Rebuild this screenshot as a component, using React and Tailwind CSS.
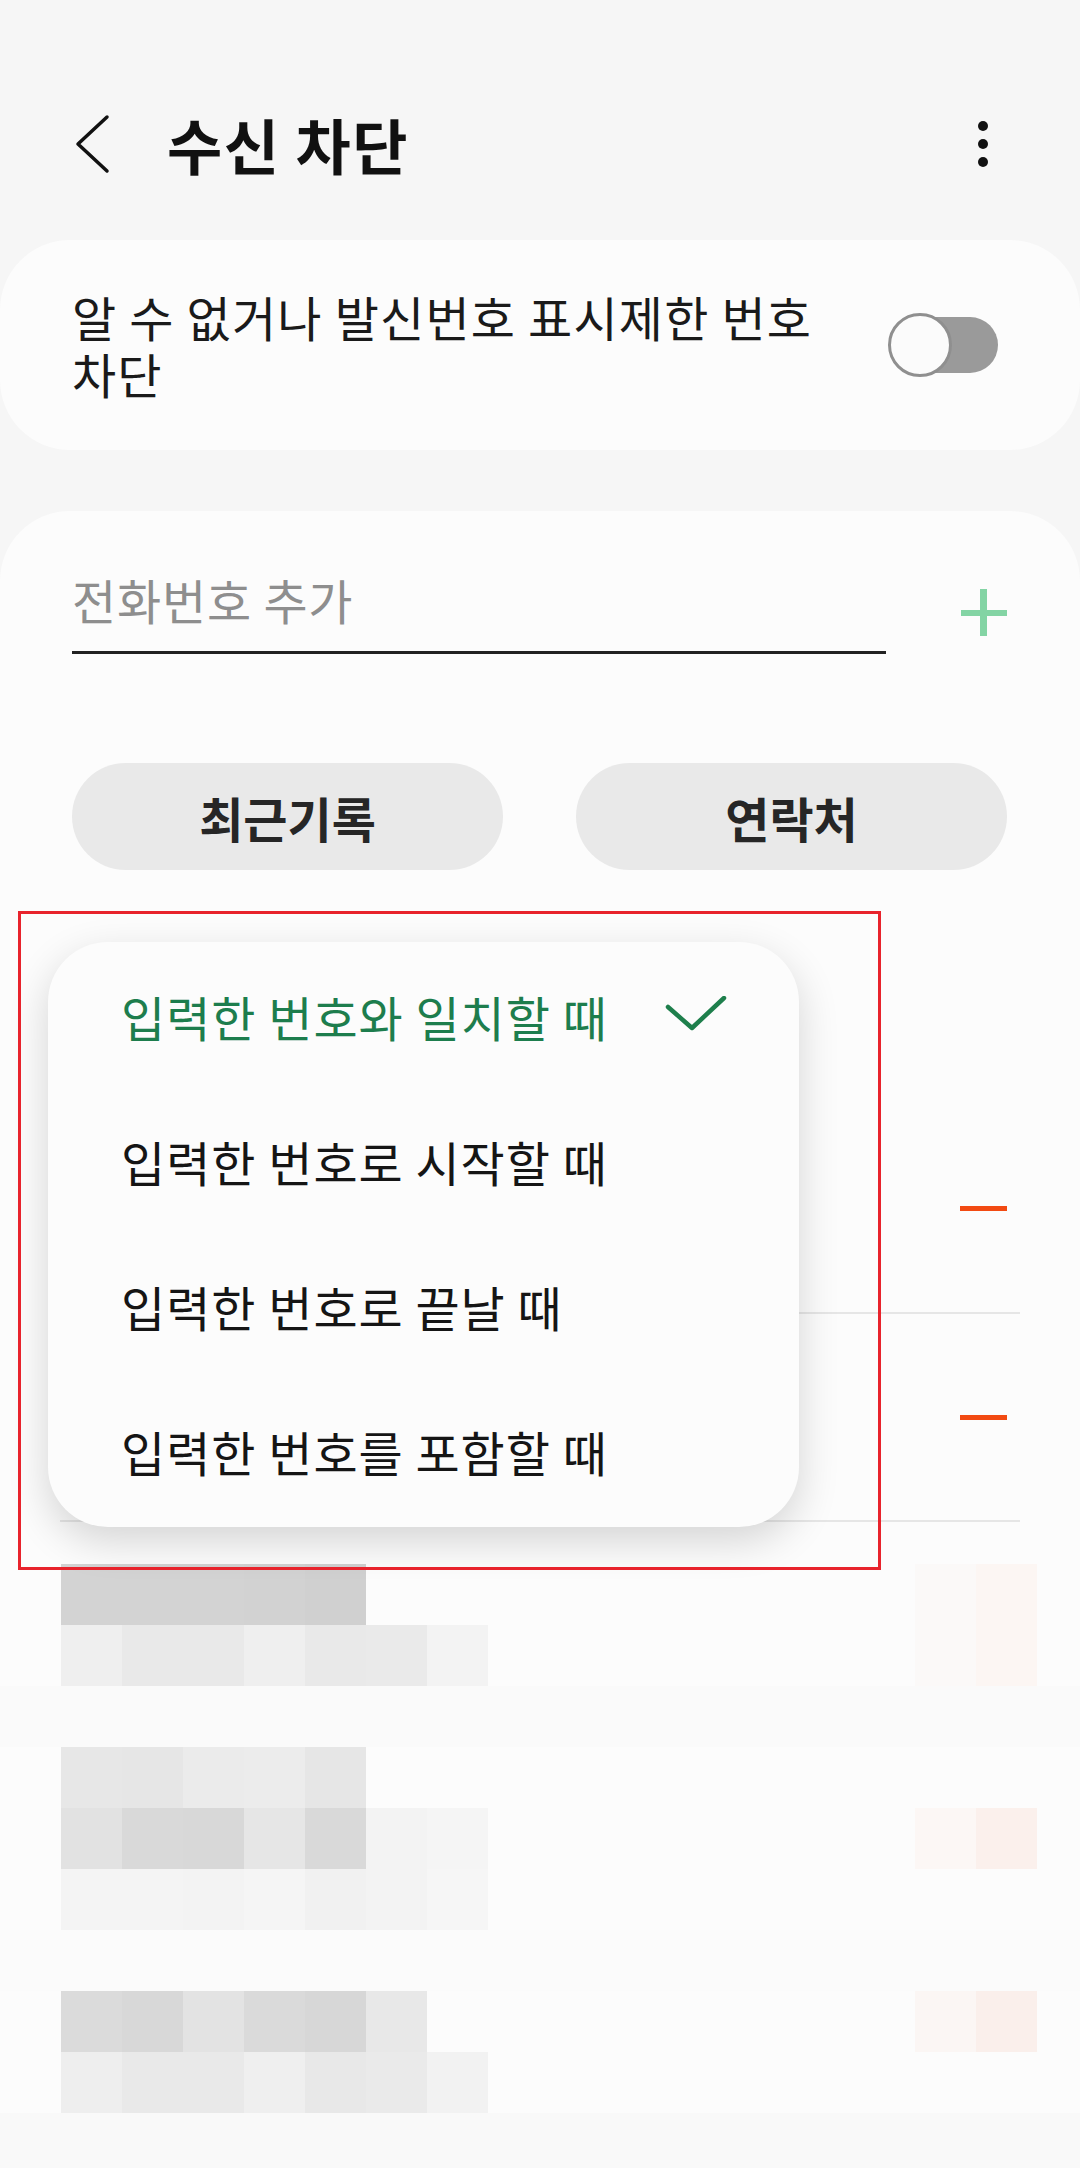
import React from "react";

// mosaic (blurred list rows) - each row is 17 blocks of 61px
const mosaic = [
  { row: "", cells: ["", "bg-[#d3d3d3]", "bg-[#d3d3d3]", "bg-[#d3d3d3]", "bg-[#d2d2d2]", "bg-[#d0d0d0]", "", "", "", "", "", "", "", "", "", "bg-[#fbf9f8]", "bg-[#fcf6f3]"] },
  { row: "", cells: ["", "bg-[#efefef]", "bg-[#e9e9e9]", "bg-[#e9e9e9]", "bg-[#efefef]", "bg-[#e9e9e9]", "bg-[#eaeaea]", "bg-[#f3f3f3]", "", "", "", "", "", "", "", "bg-[#fbf9f8]", "bg-[#fcf6f3]"] },
  { row: "bg-[#fafafa]", cells: [] },
  { row: "", cells: ["", "bg-[#e7e7e7]", "bg-[#e6e6e6]", "bg-[#ebebeb]", "bg-[#ececec]", "bg-[#e6e6e6]"] },
  { row: "", cells: ["", "bg-[#e2e2e2]", "bg-[#d9d9d9]", "bg-[#d8d8d8]", "bg-[#e6e6e6]", "bg-[#d9d9d9]", "bg-[#f3f3f3]", "bg-[#f5f5f5]", "", "", "", "", "", "", "", "bg-[#fcf7f5]", "bg-[#fbf0ec]"] },
  { row: "", cells: ["", "bg-[#f4f4f4]", "bg-[#f4f4f4]", "bg-[#f3f3f3]", "bg-[#f5f5f5]", "bg-[#f1f1f1]", "bg-[#f3f3f3]", "bg-[#f6f6f6]"] },
  { row: "bg-[#fbfbfb]", cells: [] },
  { row: "", cells: ["", "bg-[#dbdbdb]", "bg-[#d8d8d8]", "bg-[#e3e3e3]", "bg-[#dadada]", "bg-[#d7d7d7]", "bg-[#e8e8e8]", "", "", "", "", "", "", "", "", "bg-[#fbf6f4]", "bg-[#faefeb]"] },
  { row: "", cells: ["", "bg-[#eeeeee]", "bg-[#e9e9e9]", "bg-[#e9e9e9]", "bg-[#efefef]", "bg-[#e8e8e8]", "bg-[#eaeaea]", "bg-[#f2f2f2]"] },
  { row: "bg-[#f9f9f9]", cells: [] },
];

const options = [
  "입력한 번호와 일치할 때",
  "입력한 번호로 시작할 때",
  "입력한 번호로 끝날 때",
  "입력한 번호를 포함할 때",
];

function Header() {
  return (
    <div className="flex items-center h-[80px] mt-[104px] pl-[72px] pr-[92px]">
      <svg width="40" height="60" viewBox="0 0 40 60" fill="none">
        <path d="M35 3 L6 30 L35 57" stroke="#111" strokeWidth="3.5" strokeLinecap="round" strokeLinejoin="round" />
      </svg>
      <h1 className="ml-[55px] text-[60px] font-bold leading-none tracking-[1.5px] text-[#111]">수신 차단</h1>
      <div className="ml-auto flex flex-col gap-[8px]">
        <div className="w-[10px] h-[10px] rounded-full bg-[#111]" />
        <div className="w-[10px] h-[10px] rounded-full bg-[#111]" />
        <div className="w-[10px] h-[10px] rounded-full bg-[#111]" />
      </div>
    </div>
  );
}

function Toggle() {
  return (
    <div className="relative ml-auto w-[110px] h-[64px]">
      <div className="absolute left-[8px] top-[4px] w-[102px] h-[56px] rounded-full bg-[#9a9a9a]" />
      <div className="absolute left-0 top-0 w-[64px] h-[64px] rounded-full border-[3px] border-[#8f8f8f] bg-[#fbfbfb]" />
    </div>
  );
}

function UnknownCard() {
  return (
    <div className="mt-[56px] h-[210px] rounded-[70px] bg-[#fcfcfc] flex items-center pl-[72px] pr-[82px]">
      <p className="text-[48px] leading-[57px] tracking-[1.2px] text-[#1a1a1a] whitespace-nowrap">
        알 수 없거나 발신번호 표시제한 번호
        <br />
        차단
      </p>
      <Toggle />
    </div>
  );
}

function Minus() {
  return <div className="w-[47px] h-[5px] bg-[#f24a12]" />;
}

function Mosaic() {
  return (
    <div className="mt-[42px] flex flex-col">
      {mosaic.map((r, i) => (
        <div key={i} className={"flex h-[61px] shrink-0 " + r.row}>
          {r.cells.map((c, j) => (
            <div key={j} className={"w-[61px] h-[61px] shrink-0 " + c} />
          ))}
        </div>
      ))}
    </div>
  );
}

function BlockList() {
  return (
    <div className="mt-[61px] flex-1 rounded-t-[70px] bg-[#fcfcfc] pt-[64px] overflow-hidden">
      <div className="flex items-start pl-[72px]">
        <div className="w-[814px] pb-[28px] border-b-[3px] border-[#222]">
          <div className="text-[48px] leading-none tracking-[0.8px] text-[#8e8e8e]">전화번호 추가</div>
        </div>
        <svg className="ml-[75px] mt-[14px]" width="46" height="47" viewBox="0 0 46 47">
          <rect x="19" y="0" width="7" height="47" fill="#83d4a4" />
          <rect x="0" y="21" width="46" height="6" fill="#83d4a4" />
        </svg>
      </div>

      <div className="mt-[109px] flex pl-[72px] gap-[73px]">
        <button className="w-[431px] h-[107px] rounded-full bg-[#e9e9e9] text-[48px] font-bold text-[#262626]">최근기록</button>
        <button className="w-[431px] h-[107px] rounded-full bg-[#e9e9e9] text-[48px] font-bold text-[#262626]">연락처</button>
      </div>

      {/* list rows, mostly covered by the popup */}
      <div className="mt-[235px] h-[207px] flex items-center justify-end pr-[73px]">
        <Minus />
      </div>
      <div className="h-[2px] mx-[60px] bg-[#e6e6e6]" />
      <div className="h-[206px] flex items-center justify-end pr-[73px]">
        <Minus />
      </div>
      <div className="h-[2px] mx-[60px] bg-[#e6e6e6]" />

      <Mosaic />
    </div>
  );
}

function MatchMenu() {
  return (
    <div className="absolute left-[48px] top-[942px] w-[751px] h-[585px] rounded-[60px] bg-[#fcfcfc] shadow-[0_14px_40px_rgba(0,0,0,0.16)] pt-[1px]">
      {options.map((o, i) => (
        <div key={o} className="h-[145px] flex items-center pl-[73px] pr-[71px]">
          <span className={"text-[48px] leading-none tracking-[1px] " + (i === 0 ? "text-[#1d7d4d]" : "text-[#151515]")}>{o}</span>
          {i === 0 ? (
            <svg className="ml-auto" width="64" height="40" viewBox="0 0 64 40" fill="none">
              <path d="M4 11 L28 32 L60 2" stroke="#1e7f4c" strokeWidth="4.5" strokeLinecap="round" strokeLinejoin="round" />
            </svg>
          ) : null}
        </div>
      ))}
    </div>
  );
}

export default function App() {
  return (
    <div className="relative w-[1080px] h-[2168px] overflow-hidden bg-[#f6f6f6] flex flex-col font-['Noto_Sans_CJK_KR','Noto_Sans',sans-serif]">
      <Header />
      <UnknownCard />
      <BlockList />
      <MatchMenu />
      <div className="absolute left-[18px] top-[911px] w-[863px] h-[659px] border-[3px] border-[#e8232c]" />
    </div>
  );
}
